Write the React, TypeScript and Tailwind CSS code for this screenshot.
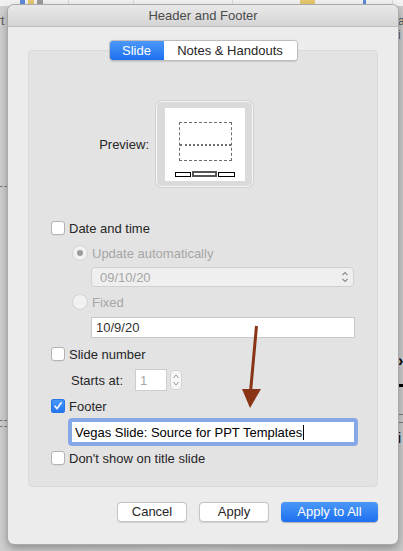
import React from 'react'

const font = { fontFamily: '"Liberation Sans", Arial, sans-serif' }

function Checkbox({ checked = false }: { checked?: boolean }) {
    if (checked) {
        return (
            <span className="flex h-[14px] w-[14px] items-center justify-center rounded-[3px] bg-gradient-to-b from-[#4b9bf8] to-[#1f73ef] shadow-[inset_0_0_0_1px_#2a76e6]">
                <svg width="10" height="10" viewBox="0 0 10 10">
                    <path d="M2 5.2 L4.1 7.6 L8.2 1.8" fill="none" stroke="white" strokeWidth="1.6" strokeLinecap="round" strokeLinejoin="round" />
                </svg>
            </span>
        )
    }
    return <span className="block h-[14px] w-[14px] rounded-[3px] border border-[#b4b4b4] bg-white shadow-[0_0.5px_0.5px_rgba(0,0,0,0.08)]" />
}

function Radio({ selected = false }: { selected?: boolean }) {
    return (
        <span className="flex h-[16px] w-[16px] items-center justify-center rounded-full border border-[#d2d2d2] bg-[#f1f1f1]">
            {selected && <span className="block h-[6px] w-[6px] rounded-full bg-[#9c9c9c]" />}
        </span>
    )
}

function PreviewBox() {
    return (
        <div className="h-[86px] w-[97px] rounded-[6px] border border-[#f7f7f7] bg-[#dadada] p-[6px_7px_6px_8px] shadow-[0_0_0_1px_#d0d0d0]">
            <div className="flex h-[73px] w-[80px] flex-col items-center bg-white">
                <div className="mt-[14px] flex h-[39px] w-[53px] flex-col border border-dashed border-[#6e6e6e]">
                    <div className="h-[23px] border-b-2 border-dotted border-[#6e6e6e]" />
                </div>
                <div className="mt-[10px] flex items-center gap-[1px]">
                    <span className="block h-[5px] w-[16px] border border-black bg-white" />
                    <span className="block h-[6px] w-[25px] border-2 border-[#555] bg-white" />
                    <span className="block h-[5px] w-[17px] border border-black bg-white" />
                </div>
            </div>
        </div>
    )
}

function Stepper() {
    return (
        <div className="flex h-[20px] w-[12px] flex-col items-center justify-center rounded-[4px] border border-[#d4d4d4] bg-[#f7f7f7]">
            <svg width="8" height="16" viewBox="0 0 8 16">
                <path d="M1.5 6 L4 3 L6.5 6" fill="none" stroke="#9a9a9a" strokeWidth="1" />
                <path d="M1.5 10 L4 13 L6.5 10" fill="none" stroke="#9a9a9a" strokeWidth="1" />
            </svg>
        </div>
    )
}

function Button({ children, primary = false, w }: { children: React.ReactNode; primary?: boolean; w: string }) {
    if (primary) {
        return (
            <div className={`flex h-[20px] ${w} items-center justify-center rounded-[4px] bg-gradient-to-b from-[#4b98f7] to-[#1c6ff0] text-[13px] text-white shadow-[0_0.5px_1px_rgba(0,0,0,0.25)]`}>
                {children}
            </div>
        )
    }
    return (
        <div className={`flex h-[20px] ${w} items-center justify-center rounded-[4px] border border-[#c4c4c4] bg-white text-[13px] text-[#262626] shadow-[0_0.5px_1px_rgba(0,0,0,0.12)]`}>
            {children}
        </div>
    )
}

export default function App() {
    return (
        <div className="relative h-[551px] w-[403px] overflow-hidden bg-gradient-to-r from-[#cfcfcf] via-[#d4d4d4] to-[#cacaca]" style={font}>
            {/* background window behind the sheet */}
            <div className="absolute left-0 top-0 h-[6px] w-[403px] bg-[#f1f1f1]">
                <span className="absolute left-[20px] top-0 h-[5px] w-[5px] bg-[#5c8bd6]" />
                <span className="absolute left-[28px] top-0 h-[5px] w-[6px] bg-[#e6c66e]" />
                <span className="absolute left-[37px] top-0 h-[5px] w-[6px] bg-[#9a9a9a]" />
                <span className="absolute left-[68px] top-0 h-[6px] w-[1px] bg-[#d8d8d8]" />
                <span className="absolute left-[133px] top-0 h-[6px] w-[1px] bg-[#d8d8d8]" />
                <span className="absolute left-[232px] top-0 h-[6px] w-[1px] bg-[#d8d8d8]" />
                <span className="absolute left-[300px] top-0 h-[5px] w-[15px] bg-[#e6c66e]" />
                <span className="absolute left-[363px] top-0 h-[5px] w-[3px] bg-[#5c8bd6]" />
                <span className="absolute left-[392px] top-0 h-[6px] w-[1px] bg-[#d8d8d8]" />
            </div>
            <span className="absolute left-[-3px] top-[12px] text-[12px] text-[#555]">rt</span>
            <span className="absolute left-[398px] top-[12px] text-[12px] text-[#555]">a</span>
            <span className="absolute left-[398px] top-[26px] text-[12px] text-[#555]">i</span>
            <span className="absolute left-0 top-[186px] w-[7px] border-t border-dashed border-[#777]" />
            <span className="absolute left-0 top-[420px] w-[7px] border-t border-dashed border-[#777]" />
            <span className="absolute left-0 top-[426px] w-[7px] border-t border-dashed border-[#777]" />
            <span className="absolute left-[398px] top-[353px] text-[16px] font-bold leading-none text-black">›</span>
            <span className="absolute left-[399px] top-[384px] h-[3px] w-[4px] bg-black" />
            <span className="absolute left-[398px] top-[414px] w-[5px] border-t border-dashed border-[#777]" />
            <span className="absolute left-[398px] top-[422px] w-[5px] border-t border-dashed border-[#777]" />
            <span className="absolute left-[398px] top-[431px] text-[14px] leading-none text-black">i</span>

            <div className="pl-[8px] pt-[5px]">
                <div className="relative flex h-[539px] w-[390px] flex-col overflow-hidden rounded-[6px] bg-[#ececec] shadow-[0_0_0_1px_#a9a9a9,0_4px_10px_rgba(0,0,0,0.35)]">
                    {/* title bar */}
                    <div className="flex h-[22px] items-center justify-center border-b border-[#bcbcbc] bg-gradient-to-b from-[#e9e9e9] to-[#d4d4d4] text-[13px] text-[#4b4b4b]">
                        Header and Footer
                    </div>

                    <div className="flex flex-col items-center pt-[13px]">
                        {/* tabs */}
                        <div className="relative z-10 flex h-[21px] overflow-hidden rounded-[4px] border border-[#bdbdbd] text-[13px] shadow-[0_0.5px_1px_rgba(0,0,0,0.12)]">
                            <div className="flex w-[54px] items-center justify-center bg-gradient-to-b from-[#4b98f7] to-[#1c6ff0] text-white">Slide</div>
                            <div className="flex w-[133px] items-center justify-center bg-white text-[#262626]">Notes &amp; Handouts</div>
                        </div>

                        {/* group box */}
                        <div className="-mt-[11px] flex h-[437px] w-[350px] flex-col rounded-[4px] border border-[#dadada] bg-[#e3e3e3] pl-[22px] text-[13px] leading-none text-[#262626]">
                            <div className="mt-[50px] flex items-center">
                                <div className="-ml-[22px] w-[120px] text-right">Preview:</div>
                                <div className="ml-[7px]"><PreviewBox /></div>
                            </div>

                            <div className="mt-[34px] flex h-[14px] items-center gap-[4px]">
                                <Checkbox />
                                <span>Date and time</span>
                            </div>

                            <div className="ml-[21px] mt-[10px] flex h-[16px] items-center gap-[4px] text-[#a6a6a6]">
                                <Radio selected />
                                <span>Update automatically</span>
                            </div>

                            <div className="ml-[40px] mt-[6px] flex h-[20px] w-[263px] items-center justify-between rounded-[4px] border border-[#d0d0d0] bg-[#efefef] pl-[8px] pr-[4px] text-[#a6a6a6]">
                                <span>09/10/20</span>
                                <svg width="8" height="14" viewBox="0 0 8 14">
                                    <path d="M1.5 5 L4 2.5 L6.5 5" fill="none" stroke="#8a8a8a" strokeWidth="1.1" />
                                    <path d="M1.5 9 L4 11.5 L6.5 9" fill="none" stroke="#8a8a8a" strokeWidth="1.1" />
                                </svg>
                            </div>

                            <div className="ml-[21px] mt-[7px] flex h-[16px] items-center gap-[4px] text-[#a6a6a6]">
                                <Radio />
                                <span>Fixed</span>
                            </div>

                            <div className="ml-[40px] mt-[7px] flex h-[21px] w-[264px] items-center border border-[#c9c9c9] bg-white pl-[4px] text-[#333]">
                                10/9/20
                            </div>

                            <div className="mt-[9px] flex h-[14px] items-center gap-[4px]">
                                <Checkbox />
                                <span>Slide number</span>
                            </div>

                            <div className="ml-[20px] mt-[8px] flex h-[22px] items-center">
                                <span className="w-[64px]">Starts at:</span>
                                <div className="flex h-[22px] w-[32px] items-center border border-[#cdcdcd] bg-white pl-[4px] text-[#a6a6a6]">1</div>
                                <div className="ml-[3px]"><Stepper /></div>
                            </div>

                            <div className="mt-[8px] flex h-[14px] items-center gap-[4px]">
                                <Checkbox checked />
                                <span>Footer</span>
                            </div>

                            <div className="ml-[17px] mt-[5px] h-[28px] w-[290px] rounded-[4px] bg-[#86a8e6] p-[4px]">
                                <div className="flex h-[20px] items-center bg-white pl-[3px] text-[13px] text-black">
                                    Vegas Slide: Source for PPT Templates
                                    <span className="ml-[1px] block h-[15px] w-[1px] bg-black" />
                                </div>
                            </div>

                            <div className="mt-[5px] flex h-[14px] items-center gap-[4px]">
                                <Checkbox />
                                <span>Don&apos;t show on title slide</span>
                            </div>
                        </div>

                        {/* buttons */}
                        <div className="mt-[15px] flex w-[350px] justify-end gap-[12px]">
                            <Button w="w-[70px]">Cancel</Button>
                            <Button w="w-[70px]">Apply</Button>
                            <Button primary w="w-[97px]">Apply to All</Button>
                        </div>
                    </div>
                </div>
            </div>

            {/* annotation arrow */}
            <svg className="absolute left-0 top-0" width="403" height="551" viewBox="0 0 403 551">
                <line x1="256.5" y1="326" x2="250.5" y2="392" stroke="#8a3416" strokeWidth="3" />
                <polygon points="242,389 261,389 250,408" fill="#8a3416" />
            </svg>
        </div>
    )
}
